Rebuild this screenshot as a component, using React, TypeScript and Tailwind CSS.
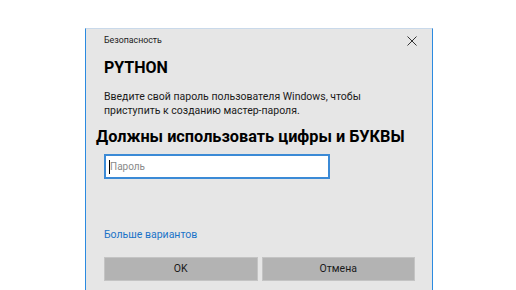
export default function App() {
  return (
    <div className="w-[516px] h-[290px] bg-white overflow-hidden pl-[85px] pt-[28px]" style={{ fontFamily: 'Roboto, "Noto Sans", sans-serif' }}>
      <div className="w-[348px] h-[280px] bg-[#e6e6e6] border-l border-r border-t border-l-[#2b8ae0] border-r-[#2b8ae0] border-t-[#c9d9ea]">
        {/* Title bar */}
        <div className="flex items-center justify-between h-[24px] pl-[18px] pr-[15px]">
          <span className="text-[8.8px] text-[#1a1a1a]">Безопасность</span>
          <svg width="10" height="10" viewBox="0 0 10 10" className="text-[#333]">
            <path d="M0.5 0.5 L9.5 9.5 M9.5 0.5 L0.5 9.5" stroke="currentColor" strokeWidth="1" />
          </svg>
        </div>

        <div className="pl-[18px] pr-[18px]">
          <div className="mt-[5px] text-[16px] font-bold text-black leading-[20px]">PYTHON</div>
          <p className="mt-[12px] text-[10.5px] leading-[14px] text-[#1a1a1a]">
            Введите свой пароль пользователя Windows, чтобы
            <br />
            приступить к созданию мастер-пароля.
          </p>
        </div>

        <div className="pl-[10px] mt-[8px] text-[16.3px] font-bold leading-[22px] text-black whitespace-nowrap">
          Должны использовать цифры и БУКВЫ
        </div>

        <div className="pl-[18px] mt-[6px]">
          <div className="w-[226px] h-[25px] bg-white border-2 border-[#3b8ad6] flex items-center px-[3px]">
            <span className="w-px h-[14px] bg-black" />
            <span className="text-[10px] text-[#8a8a8a]">Пароль</span>
          </div>
        </div>

        <div className="pl-[18px] mt-[42px]">
          <span className="text-[10.5px] text-[#1a73c8]">Больше вариантов</span>
        </div>

        <div className="flex gap-[4px] pl-[18px] pr-[17px] mt-[12px]">
          <button className="flex-1 h-[24px] bg-[#b3b3b3] border border-[#c4c4c4] text-[10.5px] text-[#1a1a1a]">OK</button>
          <button className="flex-1 h-[24px] bg-[#b3b3b3] border border-[#c4c4c4] text-[10.5px] text-[#1a1a1a]">Отмена</button>
        </div>
      </div>
    </div>
  )
}
